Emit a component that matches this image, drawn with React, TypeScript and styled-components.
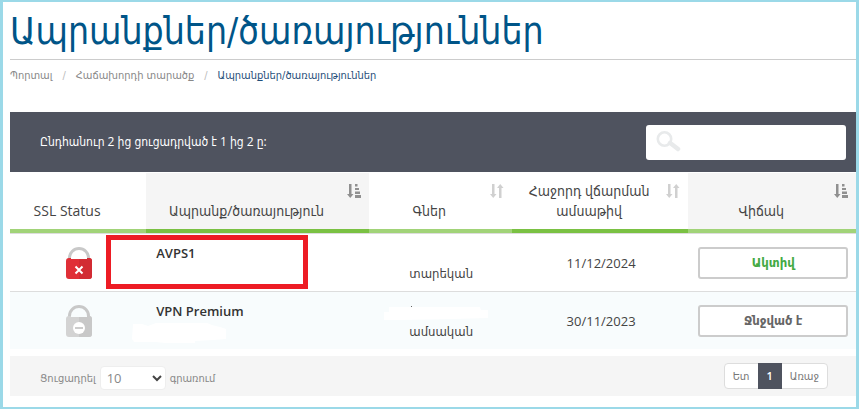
import React from "react";
import styled, { createGlobalStyle, css } from "styled-components";

const latin = `"Open Sans", "DejaVu Sans Condensed", "DejaVu Sans", sans-serif`;
const armenian = `"DejaVu Sans Condensed", "DejaVu Sans", sans-serif`;

const GlobalStyle = createGlobalStyle`
  *, *::before, *::after { box-sizing: border-box; }
  body {
    margin: 0;
    background: #fff;
    color: #444;
    font-family: ${latin};
    font-size: 13px;
    line-height: 20px;
  }
  button, input, select { font: inherit; color: inherit; }
`;

const Page = styled.main`
  min-height: 100vh;
  border: solid #9bd9e8;
  border-width: 2px 3px;
  padding: 0 0 0 7px;
`;

const Title = styled.h1`
  margin: 0;
  padding: 10px 0 7px;
  border-bottom: 1px solid #ccc;
  color: #058;
  font-family: ${armenian};
  font-size: 37px;
  font-weight: 400;
  line-height: 40px;
  white-space: nowrap;
`;

const Breadcrumb = styled.ol`
  display: flex;
  margin: 0;
  padding: 6px 0 26px;
  list-style: none;
  font-family: ${armenian};
  font-size: 11px;
  color: #888;
  white-space: nowrap;
`;

const Crumb = styled.li`
  & + &::before {
    content: "/";
    padding: 0 10px;
    color: #bbb;
  }
`;

const CrumbLink = styled.a<{ $current?: boolean }>`
  color: ${(p) => (p.$current ? "#1f4e79" : "inherit")};
  text-decoration: none;
`;

const Toolbar = styled.div`
  display: flex;
  align-items: center;
  justify-content: space-between;
  height: 60px;
  margin-bottom: 1px;
  padding: 0 10px 0 30px;
  background: #4f535f;
  color: #fff;
  font-size: 12px;
`;

const SearchBox = styled.label`
  display: flex;
  align-items: center;
  width: 200px;
  height: 35px;
  padding: 0 10px;
  border-radius: 3px;
  background: #fff;
`;

const SearchInput = styled.input`
  flex: 1;
  min-width: 0;
  border: 0;
  outline: 0;
  background: transparent;
  color: #333;
`;

const Table = styled.table`
  width: 100%;
  table-layout: fixed;
  border-collapse: separate;
  border-spacing: 0;
`;

const Col = styled.col<{ $share: number }>`
  width: ${(p) => p.$share}%;
`;

const HeadCell = styled.th<{ $sorted?: boolean; $dark?: boolean }>`
  position: relative;
  height: 60px;
  padding: 8px 32px 8px 10px;
  border-bottom: 4px solid ${(p) => (p.$dark ? "#7ac143" : "#a1d378")};
  background: ${(p) => (p.$sorted ? "#f5f5f5" : "#fff")};
  font-weight: 400;
  font-size: 14px;
  text-align: center;
  vertical-align: bottom;
`;

const SortMark = styled.span`
  position: absolute;
  top: 11px;
  right: 7px;
  display: flex;
`;

const Row = styled.tr<{ $tinted?: boolean }>`
  background: ${(p) => (p.$tinted ? "#f8fcfd" : "#fff")};
`;

const Cell = styled.td<{ $align?: "left" }>`
  position: relative;
  height: 58px;
  padding: 0 8px 0 10px;
  border-top: 1px solid #ddd;
  text-align: ${(p) => p.$align ?? "center"};
`;

const Lock = styled.svg`
  display: block;
  margin: 0 auto;
`;

const ProductName = styled.strong`
  display: block;
  height: 40px;
  color: #333;
  font-weight: 600;
`;

const Period = styled.span`
  display: block;
  padding-top: 20px;
`;

const Highlight = styled.span`
  position: absolute;
  top: 1px;
  left: -40px;
  right: 61px;
  height: 54px;
  border: 5px solid #ed1c24;
`;

const Eraser = styled.svg<{ $top: number; $left: number }>`
  position: absolute;
  top: ${(p) => p.$top}px;
  left: ${(p) => p.$left}px;
`;

const Status = styled.button<{ $active?: boolean }>`
  display: block;
  width: 100%;
  height: 32px;
  padding: 0 0 1px;
  border: 2px solid #ccc;
  border-radius: 3px;
  background: #fff;
  color: ${(p) => (p.$active ? "#4a4" : "#666")};
  font-weight: 700;
`;

const Footer = styled.footer`
  display: flex;
  align-items: center;
  justify-content: space-between;
  height: 40px;
  margin-top: 7px;
  padding: 0 28px 0 30px;
  background: #f5f5f5;
  color: #888;
  font-size: 11px;
`;

const LengthLabel = styled.label`
  display: flex;
  align-items: center;
  gap: 4px;
  padding-top: 4px;
`;

const SelectWrap = styled.span`
  position: relative;
  display: flex;
`;

const LengthSelect = styled.select`
  appearance: none;
  width: 66px;
  height: 24px;
  padding: 0 6px;
  border: 1px solid #eee;
  border-radius: 4px;
  background: #fff;
  font-size: 13px;
  line-height: 20px;
`;

const Chevron = styled.svg`
  position: absolute;
  top: 9px;
  right: 4px;
  pointer-events: none;
`;

const Pager = styled.nav`
  display: flex;
  height: 26px;
  border: 1px solid #ddd;
  border-radius: 4px;
  background: #fff;
`;

const PageButton = styled.button<{ $current?: boolean }>`
  height: 26px;
  margin: -1px 0;
  padding: 0 8px;
  border: 0;
  background: transparent;
  color: #777;
  font-size: 11px;
  ${(p) =>
    p.$current &&
    css`
      padding: 0 9px;
      background: #4f535f;
      color: #fff;
      font-weight: 600;
    `}
`;

const SortedIcon = () => (
  <svg width="15" height="14" viewBox="0 0 15 14" fill="#909090" aria-hidden="true">
    <path d="M2 0h2.500v10h2L3.250 14 0 10h2z" />
    <path d="M8 0h2.500v2.500H8zM8 4h4v2H8zM8 7.500h5v2.500H8zM8 11h6v3H8z" />
  </svg>
);

const UnsortedIcon = () => (
  <svg width="15" height="14" viewBox="0 0 15 14" fill="#d0d0d0" aria-hidden="true">
    <path d="M2 0h2.500v10h2L3.250 14 0 10h2zM9 14h2.500V4h2L10.250 0 7 4h2z" />
  </svg>
);

const LockIcon = ({ broken }: { broken?: boolean }) => (
  <Lock width="26" height="32" viewBox="0 0 26 32" role="img" aria-label={broken ? "No SSL" : "SSL inactive"}>
    <path d="M3.500 14V11a9.500 9.500 0 0 1 19 0v3" fill="none" stroke="#c8c8c8" strokeWidth="3" />
    <path d="M3 11h2v1h16v-1h2a3 3 0 0 1 3 3v15a3 3 0 0 1-3 3H3a3 3 0 0 1-3-3V14a3 3 0 0 1 3-3z" fill={broken ? "#e02f37" : "#d3d3d3"} />
    <path d="M13 12h8v-1h2a3 3 0 0 1 3 3v15a3 3 0 0 1-3 3H13z" fill={broken ? "#d22b33" : "#c8c8c8"} />
    {broken ? (
      <path d="M9.500 19.500l7 7m0-7l-7 7" stroke="#fff" strokeWidth="2" />
    ) : (
      <>
        <circle cx="13" cy="23" r="6" fill="#fff" />
        <path d="M9 23h8" stroke="#ccc" strokeWidth="2" />
      </>
    )}
  </Lock>
);

const columns = [
  { label: "SSL Status", share: 16.1 },
  { label: "Ապրանք/ծառայություն", share: 26.3, dark: true, sorted: true, icon: <SortedIcon /> },
  { label: "Գներ", share: 16.9, icon: <UnsortedIcon /> },
  { label: "Հաջորդ վճարման ամսաթիվ", share: 20.9, dark: true, icon: <UnsortedIcon /> },
  { label: "Վիճակ", share: 19.8, sorted: true, icon: <SortedIcon /> },
];

export default function App() {
  return (
    <>
      <GlobalStyle />
      <Page lang="hy">
        <Title>Ապրանքներ/ծառայություններ</Title>
        <Breadcrumb>
          <Crumb><CrumbLink href="#">Պորտալ</CrumbLink></Crumb>
          <Crumb><CrumbLink href="#">Հաճախորդի տարածք</CrumbLink></Crumb>
          <Crumb><CrumbLink href="#" $current aria-current="page">Ապրանքներ/ծառայություններ</CrumbLink></Crumb>
        </Breadcrumb>

        <Toolbar>
          <span>Ընդհանուր 2 ից ցուցադրված է 1 ից 2 ը:</span>
          <SearchBox>
            <svg width="25" height="22" viewBox="0 0 25 22" fill="none" aria-hidden="true">
              <circle cx="8.500" cy="8" r="6.700" stroke="#e8eaeb" strokeWidth="2.600" />
              <path d="M14 12l1.500 1 6.500 5" stroke="#e8eaeb" strokeWidth="4.500" strokeLinecap="round" />
            </svg>
            <SearchInput type="search" aria-label="Որոնում" />
          </SearchBox>
        </Toolbar>

        <Table>
          <colgroup>
            {columns.map((c) => <Col key={c.label} $share={c.share} />)}
          </colgroup>
          <thead>
            <tr>
              {columns.map((c) => (
                <HeadCell key={c.label} scope="col" $dark={c.dark} $sorted={c.sorted}>
                  {c.label}
                  {c.icon && <SortMark>{c.icon}</SortMark>}
                </HeadCell>
              ))}
            </tr>
          </thead>
          <tbody>
            <Row>
              <Cell><LockIcon broken /></Cell>
              <Cell $align="left">
                <ProductName>AVPS1</ProductName>
                <Highlight />
              </Cell>
              <Cell><Period>տարեկան</Period></Cell>
              <Cell>11/12/2024</Cell>
              <Cell><Status type="button" $active>Ակտիվ</Status></Cell>
            </Row>
            <Row $tinted>
              <Cell><LockIcon /></Cell>
              <Cell $align="left">
                <ProductName>VPN Premium</ProductName>
                <Eraser $top={30} $left={-14} width="95" height="22" viewBox="0 0 95 22" fill="#fff" aria-hidden="true">
                  <path d="M1 2h9l6 2 8-3h51l5 2 8 2 6 2v10l-13 1-18 1v2H33l-9-1H2L0 17z" />
                </Eraser>
              </Cell>
              <Cell>
                <Eraser $top={14} $left={14} width="106" height="14" viewBox="0 0 106 14" fill="#fff" aria-hidden="true">
                  <path d="M6 1h91l1 3h7v8l-36 1-54 1H1V6h5z" />
                  <path d="M28 0h1v1h-1z" fill="#666" />
                </Eraser>
                <Period>ամսական</Period>
              </Cell>
              <Cell>30/11/2023</Cell>
              <Cell><Status type="button">Ջնջված է</Status></Cell>
            </Row>
          </tbody>
        </Table>

        <Footer>
          <LengthLabel>
            Ցուցադրել
            <SelectWrap>
              <LengthSelect defaultValue="10">
                <option>10</option>
                <option>25</option>
                <option>50</option>
              </LengthSelect>
              <Chevron width="10" height="7" viewBox="0 0 10 7" fill="none" stroke="#444" strokeWidth="2" aria-hidden="true">
                <path d="M1 1l4 4 4-4" />
              </Chevron>
            </SelectWrap>
            գրառում
          </LengthLabel>
          <Pager>
            <PageButton type="button">Ետ</PageButton>
            <PageButton type="button" $current aria-current="page">1</PageButton>
            <PageButton type="button">Առաջ</PageButton>
          </Pager>
        </Footer>
      </Page>
    </>
  );
}
